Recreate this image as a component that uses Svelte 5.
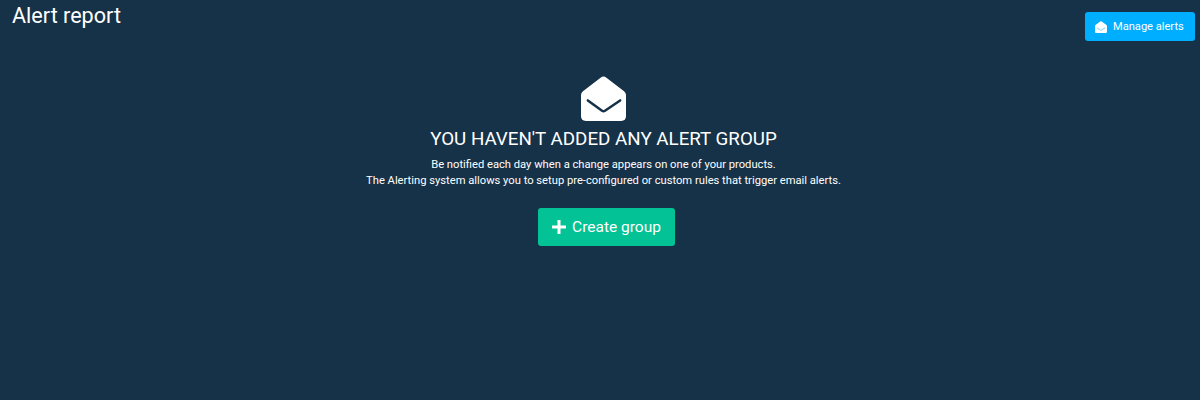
<script>
	const lines = [
		'Be notified each day when a change appears on one of your products.',
		'The Alerting system allows you to setup pre-configured or custom rules that trigger email alerts.'
	];
</script>

<div class="page">
	<header class="top">
		<h1>Alert report</h1>
		<button class="manage" type="button">
			<svg viewBox="0 0 46 46" width="12" height="12" aria-hidden="true">
				<path class="open" d="M23 0.5 Q24.5 0.5 26 1.7 L44 15.5 Q46 17 46 19.5 V41 Q46 46 41 46 H5 Q0 46 0 41 V19.5 Q0 17 2 15.5 L20 1.7 Q21.5 0.5 23 0.5Z" />
				<path class="flap" d="M9 27 L21.5 35 Q23 36 24.500 35 L37 27" />
			</svg>
			Manage alerts
		</button>
	</header>

	<main class="empty">
		<svg class="envelope" viewBox="0 0 46 46" width="45" height="45" aria-hidden="true">
			<path class="open" d="M23 0.5 Q24.5 0.5 26 1.7 L44 15.5 Q46 17 46 19.5 V41 Q46 46 41 46 H5 Q0 46 0 41 V19.5 Q0 17 2 15.5 L20 1.7 Q21.5 0.5 23 0.5Z" />
			<path class="flap" d="M7 25 L21.5 35.500 Q23 36.500 24.500 35.500 L40 25" />
		</svg>
		<h2>YOU HAVEN'T ADDED ANY ALERT GROUP</h2>
		<div class="desc">
			{#each lines as line}
				<p>{line}</p>
			{/each}
		</div>
		<button class="create" type="button">
			<svg viewBox="0 0 14 14" width="14" height="14" aria-hidden="true">
				<path d="M7 0 V14 M0 7 H14" />
			</svg>
			Create group
		</button>
	</main>
</div>

<style>
	:global(body) {
		background: #163248;
		font-family: Roboto, "Liberation Sans", sans-serif;
		color: #fff;
	}

	.page {
		height: 400px;
		padding: 0 5px 0 12px;
		box-sizing: border-box;
		overflow: hidden;
	}

	.top {
		display: flex;
		justify-content: space-between;
		align-items: flex-start;
		height: 76px;
	}

	h1 {
		margin: 0;
		font-size: 21.6px;
		font-weight: 400;
		line-height: 32px;
	}

	.manage {
		display: flex;
		align-items: center;
		gap: 6px;
		margin-top: 12px;
		width: 110px;
		height: 29px;
		padding: 0 0 0 10px;
		border: 0;
		border-radius: 3px;
		background: #00aeff;
		color: #fff;
		font: 400 11.1px Roboto, sans-serif;
	}

	.open {
		fill: #fff;
	}

	.flap {
		fill: none;
		stroke: #163248;
		stroke-width: 2.6px;
		stroke-linecap: round;
	}

	.manage .flap {
		stroke: #8fd9ff;
		stroke-width: 4px;
	}

	.empty {
		display: flex;
		flex-direction: column;
		align-items: center;
	}

	.envelope {
		display: block;
		margin-right: 1px;
	}

	h2 {
		margin: 7px 0 0;
		font-size: 18.75px;
		font-weight: 400;
		line-height: 22px;
	}

	.desc {
		margin-top: 7px;
		text-align: center;
		font-size: 11.2px;
		line-height: 16px;
	}

	p {
		margin: 0;
	}

	.create {
		display: flex;
		align-items: center;
		justify-content: center;
		gap: 6px;
		margin: 19px 0 0 6px;
		width: 137px;
		height: 38px;
		border: 0;
		border-radius: 3px;
		background: #03c295;
		color: #fff;
		font: 400 15.5px Roboto, sans-serif;
	}

	.create path {
		fill: none;
		stroke: #fff;
		stroke-width: 3px;
	}
</style>
